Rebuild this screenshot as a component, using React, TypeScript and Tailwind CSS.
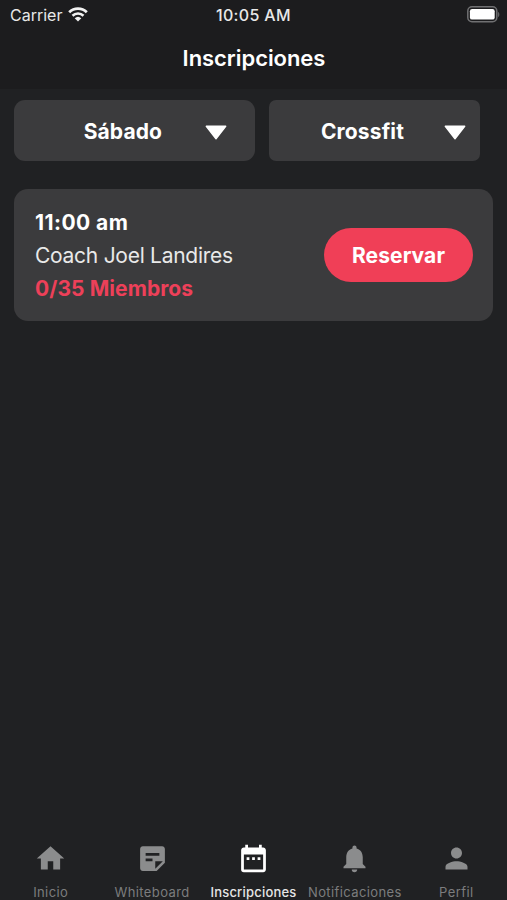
import React from "react";
import {
  MdHome,
  MdStickyNote2,
  MdDateRange,
  MdNotifications,
  MdPerson,
} from "react-icons/md";

const tabs = [
  { label: "Inicio", icon: MdHome, active: false },
  { label: "Whiteboard", icon: MdStickyNote2, active: false },
  { label: "Inscripciones", icon: MdDateRange, active: true },
  { label: "Notificaciones", icon: MdNotifications, active: false },
  { label: "Perfil", icon: MdPerson, active: false },
];

const WifiIcon = () => (
  <svg width="20" height="15" viewBox="0 0 20 15" fill="none">
    <path d="M1.2 5.2a12.6 12.6 0 0 1 17.6 0" stroke="#f2f2f2" strokeWidth="2.8" />
    <path d="M4.5 8.7a7.9 7.9 0 0 1 11 0" stroke="#f2f2f2" strokeWidth="2.6" />
    <path d="M10 14.6 6.7 11.3a4.8 4.8 0 0 1 6.6 0z" fill="#f2f2f2" />
  </svg>
);

const BatteryIcon = () => (
  <svg width="33" height="17" viewBox="0 0 33 17" fill="none">
    <rect x="0.8" y="0.8" width="29" height="15" rx="4.2" stroke="#707072" strokeWidth="1.5" />
    <rect x="2.9" y="3" width="24.8" height="10.6" rx="2.2" fill="#ffffff" />
    <path d="M31.2 6v5c1.5-.5 1.5-4.5 0-5z" fill="#707072" />
  </svg>
);

const Caret = () => (
  <svg width="22" height="15" viewBox="0 0 22 15">
    <path
      d="M1.3 1.2h19.4L11 13.7z"
      fill="#ffffff"
      stroke="#ffffff"
      strokeWidth="1.4"
      strokeLinejoin="round"
    />
  </svg>
);

const App = () => {
  return (
    <div className="flex h-[900px] w-[507px] flex-col overflow-hidden bg-[#202123] font-['Inter',sans-serif] text-white">
      {/* Header */}
      <header className="h-[89px] bg-[#1c1c1e]">
        <div className="grid h-[29px] grid-cols-3 items-center pr-[7px] pl-[10px] text-[#e8e8e8]">
          <div className="flex items-center gap-[6px]">
            <span className="text-[16px]">Carrier</span>
            <WifiIcon />
          </div>
          <span className="pr-[3px] text-center text-[16px] font-medium tracking-[0.35px]">
            10:05 AM
          </span>
          <div className="flex justify-end">
            <BatteryIcon />
          </div>
        </div>
        <h1 className="pt-[13px] pl-px text-center text-[22px] leading-[32px] font-semibold tracking-[-0.05px]">
          Inscripciones
        </h1>
      </header>

      <main className="flex-1 px-[14px] pt-[11px]">
        {/* Filters */}
        <div className="flex gap-[14px]">
          <button className="flex h-[61px] w-[241px] items-center justify-end rounded-[11px] bg-[#3b3b3d] pt-[2px] pr-[28px]">
            <span className="mr-[43px] text-[21px] font-bold tracking-[0.1px]">Sábado</span>
            <span className="pt-[2px]">
              <Caret />
            </span>
          </button>
          <button className="flex h-[61px] w-[211px] items-center justify-end rounded-[7px] bg-[#3b3b3d] pt-[2px] pr-[14px]">
            <span className="mr-[40px] text-[21px] font-bold tracking-[0.15px]">Crossfit</span>
            <span className="pt-[2px]">
              <Caret />
            </span>
          </button>
        </div>

        {/* Class card */}
        <div className="mt-[28px] flex h-[132px] items-center justify-between rounded-[14px] bg-[#3b3b3d] pr-[20px] pl-[21px]">
          <div className="text-[21px] leading-[33px]">
            <p className="font-bold tracking-[0.45px]">11:00 am</p>
            <p className="tracking-[-0.27px] text-[#e9e9e9]">Coach Joel Landires</p>
            <p className="font-bold tracking-[0.08px] text-[#ed4059]">0/35 Miembros</p>
          </div>
          <button className="h-[54px] w-[149px] rounded-full bg-[#f03f57] pt-[2px] text-[21px] font-bold tracking-[0.1px]">
            Reservar
          </button>
        </div>
      </main>

      {/* Tab bar */}
      <nav className="grid h-[58px] grid-cols-5">
        {tabs.map(({ label, icon: Icon, active }) => (
          <div
            key={label}
            className={`flex flex-col items-center ${
              active ? "text-white" : "text-[#8b8c8d]"
            }`}
          >
            <Icon size={33} />
            <span
              className={`mt-[7px] text-[13px] leading-[20px] whitespace-nowrap ${
                active
                  ? "font-medium tracking-[0.2px] text-[#e6e6e6]"
                  : "tracking-[0.4px] text-[#7c7d7e]"
              }`}
            >
              {label}
            </span>
          </div>
        ))}
      </nav>
    </div>
  );
};

export default App;
